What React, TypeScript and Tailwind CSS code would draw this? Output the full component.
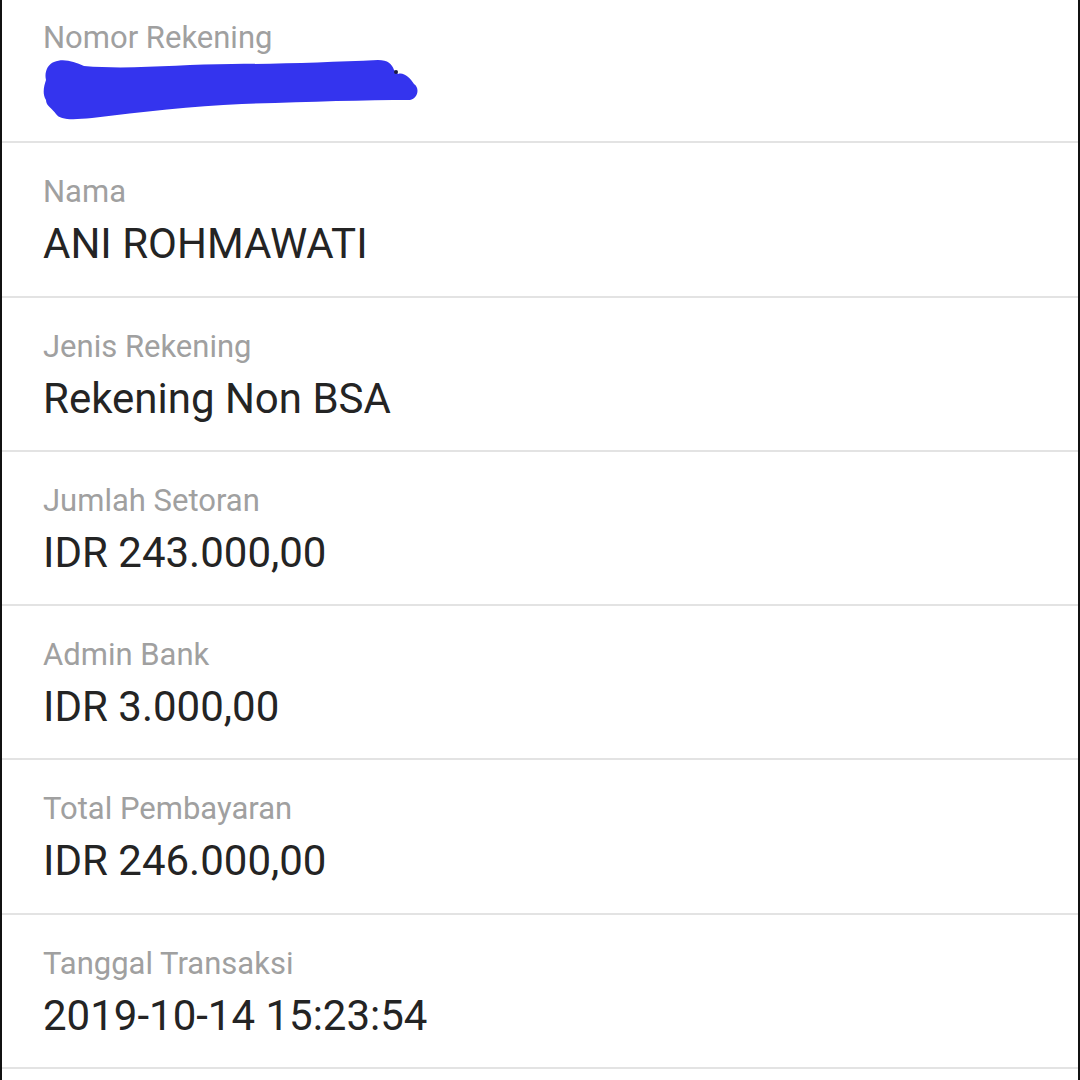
const rows = [
  { label: "Nomor Rekening", value: null },
  { label: "Nama", value: "ANI ROHMAWATI" },
  { label: "Jenis Rekening", value: "Rekening Non BSA" },
  { label: "Jumlah Setoran", value: "IDR 243.000,00" },
  { label: "Admin Bank", value: "IDR 3.000,00" },
  { label: "Total Pembayaran", value: "IDR 246.000,00" },
  { label: "Tanggal Transaksi", value: "2019-10-14 15:23:54" },
];

// blue marker scribble hiding the account number
function Scribble() {
  return (
    <svg width="380" height="64" viewBox="0 0 380 64" className="block">
      <path
        d="M12 4 C22 0 32 4 42 8 C90 12 140 6 190 6 C240 6 290 4 336 2 C346 2 350 6 352 12 L356 16 C362 14 368 20 372 26 C378 30 376 40 368 42 C320 42 260 44 200 46 C150 48 100 54 50 60 C30 62 18 62 14 56 C10 50 4 48 4 42 C0 36 2 28 4 22 C2 14 6 6 12 4 Z"
        fill="#3434ee"
      />
      <circle cx="354" cy="14" r="2" fill="#1a1a40" />
    </svg>
  );
}

export default function App() {
  return (
    <div
      className="w-[1080px] h-[1080px] overflow-hidden bg-white border-x-2 border-[#111]"
      style={{ fontFamily: "Roboto, 'Noto Sans', sans-serif" }}
    >
      <div className="-mt-[11px]">
        {rows.map((r) => (
          <div
            key={r.label}
            className="h-[154.3px] border-b-2 border-[#e3e3e3] pl-[41px] pt-[32px]"
          >
            <div className="text-[31px] leading-[34px] text-[#a0a0a0]">{r.label}</div>
            {r.value ? (
              <div className="mt-[13px] text-[42px] leading-[44px] text-[#242424]">{r.value}</div>
            ) : (
              <div className="mt-[3px] -ml-[1px]">
                <Scribble />
              </div>
            )}
          </div>
        ))}
      </div>
    </div>
  );
}
